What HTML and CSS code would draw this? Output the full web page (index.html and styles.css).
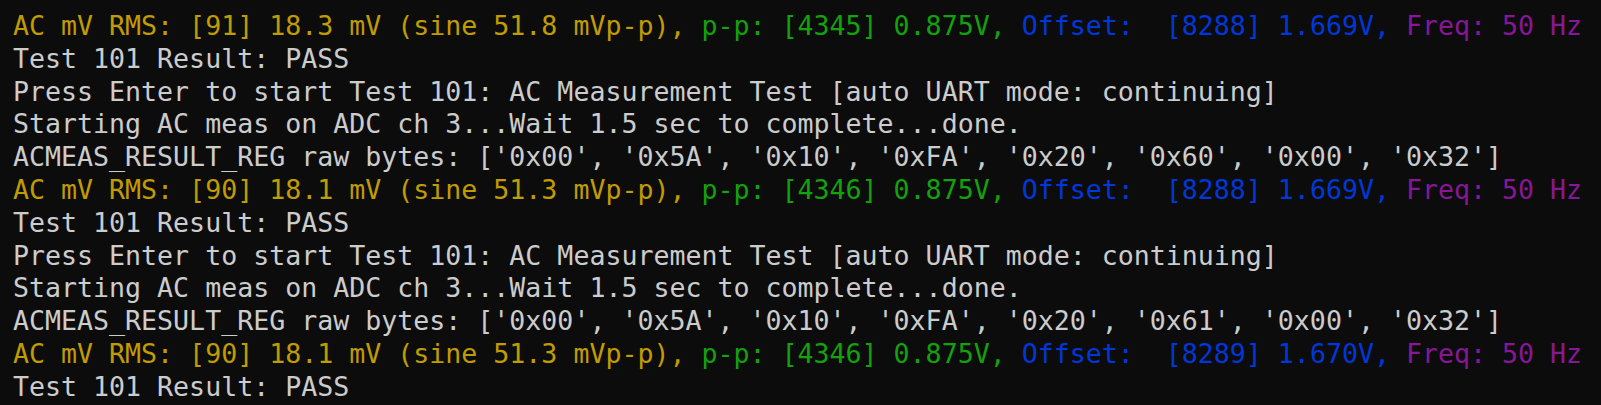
FILE: index.html
```html
<!DOCTYPE html>
<html>
<head>
<meta charset="utf-8">
<link rel="stylesheet" href="styles.css">
</head>
<body>
<div class="term">
<div class="line"><span class="y">AC mV RMS: [91] 18.3 mV (sine 51.8 mVp-p), </span><span class="g">p-p: [4345] 0.875V, </span><span class="b">Offset:  [8288] 1.669V, </span><span class="m">Freq: 50 Hz</span></div>
<div class="line">Test 101 Result: PASS</div>
<div class="line">Press Enter to start Test 101: AC Measurement Test [auto UART mode: continuing]</div>
<div class="line">Starting AC meas on ADC ch 3...Wait 1.5 sec to complete...done.</div>
<div class="line">ACMEAS_RESULT_REG raw bytes: ['0x00', '0x5A', '0x10', '0xFA', '0x20', '0x60', '0x00', '0x32']</div>
<div class="line"><span class="y">AC mV RMS: [90] 18.1 mV (sine 51.3 mVp-p), </span><span class="g">p-p: [4346] 0.875V, </span><span class="b">Offset:  [8288] 1.669V, </span><span class="m">Freq: 50 Hz</span></div>
<div class="line">Test 101 Result: PASS</div>
<div class="line">Press Enter to start Test 101: AC Measurement Test [auto UART mode: continuing]</div>
<div class="line">Starting AC meas on ADC ch 3...Wait 1.5 sec to complete...done.</div>
<div class="line">ACMEAS_RESULT_REG raw bytes: ['0x00', '0x5A', '0x10', '0xFA', '0x20', '0x61', '0x00', '0x32']</div>
<div class="line"><span class="y">AC mV RMS: [90] 18.1 mV (sine 51.3 mVp-p), </span><span class="g">p-p: [4346] 0.875V, </span><span class="b">Offset:  [8289] 1.670V, </span><span class="m">Freq: 50 Hz</span></div>
<div class="line">Test 101 Result: PASS</div>
</div>
</body>
</html>
```
FILE: styles.css
```css
html, body {
  margin: 0;
  padding: 0;
  background: #0c0c0c;
  overflow: hidden;
}
.term {
  padding: 10px 0 0 13px;
  font-family: "DejaVu Sans Mono", "Liberation Mono", monospace;
  font-size: 26.6px;
  line-height: 32.8px;
  color: #cccccc;
  display: flex;
  flex-direction: column;
}
.line {
  white-space: pre;
}
.y { color: #c19c00; }
.g { color: #13a10e; }
.b { color: #0037da; }
.m { color: #881798; }
```
